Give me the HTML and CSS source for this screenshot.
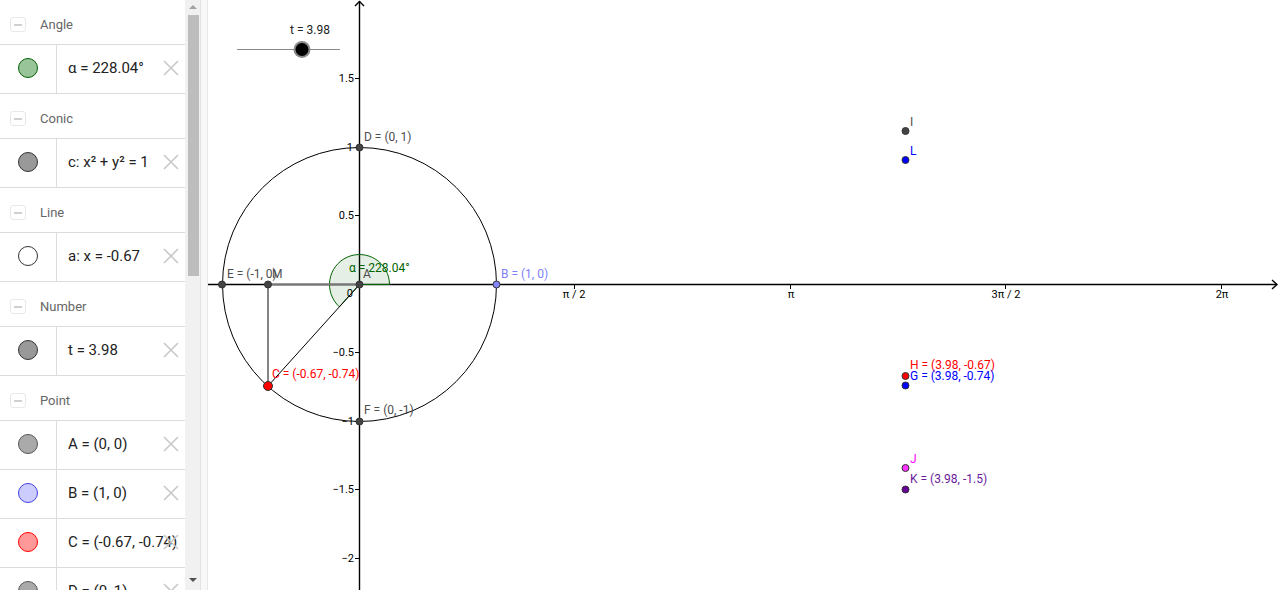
FILE: index.html
```html
<!DOCTYPE html>
<html lang="en">
<head>
<meta charset="utf-8">
<title>Unit circle</title>
<link rel="stylesheet" href="styles.css">
</head>
<body>
<div class="app">
  <aside class="algebra">
    <div class="list">
      <section class="group">
        <div class="group-head"><span class="toggle"></span><span class="group-title">Angle</span></div>
        <div class="item last">
          <div class="marble-cell"><span class="marble m-angle"></span></div>
          <div class="item-text">α = 228.04°</div>
          <svg class="del" viewBox="0 0 16 16"><path d="M1 1L15 15M15 1L1 15"/></svg>
        </div>
      </section>
      <section class="group">
        <div class="group-head"><span class="toggle"></span><span class="group-title">Conic</span></div>
        <div class="item last">
          <div class="marble-cell"><span class="marble m-gray"></span></div>
          <div class="item-text">c: x² + y² = 1</div>
          <svg class="del" viewBox="0 0 16 16"><path d="M1 1L15 15M15 1L1 15"/></svg>
        </div>
      </section>
      <section class="group">
        <div class="group-head"><span class="toggle"></span><span class="group-title">Line</span></div>
        <div class="item last">
          <div class="marble-cell"><span class="marble m-white"></span></div>
          <div class="item-text">a: x = -0.67</div>
          <svg class="del" viewBox="0 0 16 16"><path d="M1 1L15 15M15 1L1 15"/></svg>
        </div>
      </section>
      <section class="group">
        <div class="group-head"><span class="toggle"></span><span class="group-title">Number</span></div>
        <div class="item last">
          <div class="marble-cell"><span class="marble m-gray"></span></div>
          <div class="item-text">t = 3.98</div>
          <svg class="del" viewBox="0 0 16 16"><path d="M1 1L15 15M15 1L1 15"/></svg>
        </div>
      </section>
      <section class="group">
        <div class="group-head"><span class="toggle"></span><span class="group-title">Point</span></div>
        <div class="item">
          <div class="marble-cell"><span class="marble m-lgray"></span></div>
          <div class="item-text">A = (0, 0)</div>
          <svg class="del" viewBox="0 0 16 16"><path d="M1 1L15 15M15 1L1 15"/></svg>
        </div>
        <div class="item">
          <div class="marble-cell"><span class="marble m-blue"></span></div>
          <div class="item-text">B = (1, 0)</div>
          <svg class="del" viewBox="0 0 16 16"><path d="M1 1L15 15M15 1L1 15"/></svg>
        </div>
        <div class="item">
          <div class="marble-cell"><span class="marble m-red"></span></div>
          <div class="item-text">C = (-0.67, -0.74)</div>
          <svg class="del" viewBox="0 0 16 16"><path d="M1 1L15 15M15 1L1 15"/></svg>
        </div>
        <div class="item">
          <div class="marble-cell"><span class="marble m-lgray"></span></div>
          <div class="item-text">D = (0, 1)</div>
          <svg class="del" viewBox="0 0 16 16"><path d="M1 1L15 15M15 1L1 15"/></svg>
        </div>
      </section>
    </div>
    <div class="scrollbar">
      <span class="arrow-up"></span>
      <span class="thumb"></span>
      <span class="arrow-down"></span>
    </div>
  </aside>
  <div class="splitter"></div>
  <main class="canvas">
    <svg class="graphics" viewBox="208 0 1072 590" width="1072" height="590">
      <!-- slider -->
      <line x1="237" y1="49.5" x2="340" y2="49.5" class="slider-line"/>
      <circle cx="302" cy="49.5" r="8.5" fill="#8a8a8a"/>
      <circle cx="302" cy="49.5" r="6.5" fill="#000"/>
      <text x="310" y="34" class="lbl dark" text-anchor="middle">t = 3.98</text>

      <!-- axes -->
      <line x1="208" y1="284.5" x2="1277" y2="284.5" class="axis"/>
      <path d="M1272 280L1277 284.5L1272 289" class="axis" fill="none"/>
      <line x1="359.5" y1="1" x2="359.5" y2="590" class="axis"/>
      <path d="M355 6L359.5 1.5L364 6" class="axis" fill="none"/>

      <!-- y ticks -->
      <g class="tick">
        <line x1="355" y1="78.5" x2="359" y2="78.5"/>
        <line x1="355" y1="147.5" x2="359" y2="147.5"/>
        <line x1="355" y1="215.5" x2="359" y2="215.5"/>
        <line x1="355" y1="352.5" x2="359" y2="352.5"/>
        <line x1="355" y1="421.5" x2="359" y2="421.5"/>
        <line x1="355" y1="489.5" x2="359" y2="489.5"/>
        <line x1="355" y1="558.5" x2="359" y2="558.5"/>
        <line x1="574.5" y1="284" x2="574.5" y2="289"/>
        <line x1="790.5" y1="284" x2="790.5" y2="289"/>
        <line x1="1005.5" y1="284" x2="1005.5" y2="289"/>
        <line x1="1221.5" y1="284" x2="1221.5" y2="289"/>
      </g>
      <g class="axlbl" text-anchor="end">
        <text x="354" y="82">1.5</text>
        <text x="353" y="151">1</text>
        <text x="354" y="219">0.5</text>
        <text x="354" y="356">−0.5</text>
        <text x="354" y="425">−1</text>
        <text x="354" y="493">−1.5</text>
        <text x="354" y="562">−2</text>
        <text x="353" y="297">0</text>
      </g>
      <g class="axlbl" text-anchor="middle">
        <text x="574" y="298">π / 2</text>
        <text x="791" y="298">π</text>
        <text x="1006" y="298">3π / 2</text>
        <text x="1222" y="298">2π</text>
      </g>

      <!-- unit circle -->
      <circle cx="359.5" cy="284.5" r="137" fill="none" stroke="#000" stroke-width="1"/>

      <!-- angle sector -->
      <path d="M359.5 284.5L389.5 284.5A30 30 0 1 0 339.4 306.8Z" fill="rgba(0,100,0,0.1)" stroke="#006400" stroke-width="1"/>

      <!-- segments -->
      <line x1="268" y1="284.5" x2="359.5" y2="284.5" stroke="#777" stroke-width="2"/>
      <line x1="268" y1="284.5" x2="268" y2="386" stroke="#666" stroke-width="1.6"/>
      <line x1="359.5" y1="284.5" x2="268" y2="386" stroke="#000" stroke-width="1"/>

      <!-- points -->
      <g class="pt">
        <circle cx="222" cy="284.5" r="3.5" fill="#444"/>
        <circle cx="268" cy="284.5" r="3.5" fill="#444"/>
        <circle cx="359.5" cy="284.5" r="3.5" fill="#444"/>
        <circle cx="496.5" cy="284.5" r="3.5" fill="#8585ff"/>
        <circle cx="359.5" cy="147.5" r="3.5" fill="#444"/>
        <circle cx="359.5" cy="421.5" r="3.5" fill="#444"/>
        <circle cx="268" cy="386" r="4.5" fill="#ff0000"/>
        <circle cx="905.5" cy="131" r="3.5" fill="#444"/>
        <circle cx="905.5" cy="160" r="3.5" fill="#0000ff"/>
        <circle cx="905.5" cy="376" r="3.5" fill="#ff0000"/>
        <circle cx="905.5" cy="385.5" r="3.5" fill="#0000ff"/>
        <circle cx="905.5" cy="468" r="3.5" fill="#ff33ff"/>
        <circle cx="905.5" cy="489.5" r="3.5" fill="#660099"/>
      </g>

      <!-- labels -->
      <text x="227" y="278" class="lbl grey">E = (-1, 0)</text>
      <text x="272" y="278" class="lbl grey">M</text>
      <text x="363" y="278" class="lbl grey">A</text>
      <text x="349" y="272" class="lbl green">α = 228.04°</text>
      <text x="501" y="278" class="lbl lav">B = (1, 0)</text>
      <text x="364" y="141" class="lbl grey">D = (0, 1)</text>
      <text x="364" y="414" class="lbl grey">F = (0, -1)</text>
      <text x="272" y="378" class="lbl red">C = (-0.67, -0.74)</text>
      <text x="910" y="126" class="lbl grey">I</text>
      <text x="910" y="155" class="lbl blue">L</text>
      <text x="910" y="369" class="lbl red">H = (3.98, -0.67)</text>
      <text x="910" y="380" class="lbl blue">G = (3.98, -0.74)</text>
      <text x="910" y="463" class="lbl pink">J</text>
      <text x="910" y="483" class="lbl purple">K = (3.98, -1.5)</text>
    </svg>
  </main>
</div>
</body>
</html>
```
FILE: styles.css
```css
* { box-sizing: border-box; }
html, body { margin: 0; padding: 0; height: 100%; overflow: hidden; background: #fff; }
body { font-family: Roboto, "Liberation Sans", Arial, sans-serif; }

.app { display: flex; width: 1280px; height: 590px; }

.algebra { display: flex; width: 200px; height: 590px; flex: none; overflow: hidden; background: #fff; }
.list { width: 185px; flex: none; overflow: hidden; }

.group-head { height: 44px; display: flex; align-items: center; padding-top: 5px; }
.toggle { width: 16px; height: 15px; margin-left: 10px; border: 1px solid #e8e8e8; border-radius: 3px; display: flex; align-items: center; justify-content: center; }
.toggle::before { content: ""; width: 8px; height: 2px; background: #d0d0d0; }
.group-title { margin-left: 14px; font-size: 13px; color: #666; }

.item { position: relative; display: flex; height: 49px; border-top: 1px solid #dcdcdc; }
.item.last { height: 50px; border-bottom: 1px solid #dcdcdc; }
.item:last-child { border-bottom: 1px solid #dcdcdc; }
.marble-cell { width: 57px; flex: none; border-right: 1px solid #dcdcdc; display: flex; align-items: center; justify-content: center; padding-bottom: 2px; }
.marble { width: 20px; height: 20px; border-radius: 50%; border: 1px solid #333; }
.m-angle { background: #99c499; border-color: #006400; }
.m-gray { background: #999; border-color: #333; }
.m-white { background: #fff; border-color: #333; }
.m-lgray { background: #aaa; border-color: #555; }
.m-blue { background: #ccccff; border-color: #4040e0; }
.m-red { background: #ff9999; border-color: #ff0000; }
.item-text { display: flex; align-items: center; padding-left: 11px; padding-bottom: 2px; font-size: 15px; color: #222; white-space: nowrap; }
.del { position: absolute; right: 6px; top: 15px; width: 16px; height: 16px; fill: none; stroke: #c8c8c8; stroke-width: 1.6; }

.scrollbar { width: 15px; flex: none; background: #f1f1f1; display: flex; flex-direction: column; align-items: center; position: relative; }
.arrow-up { margin-top: 5px; width: 0; height: 0; border-left: 4px solid transparent; border-right: 4px solid transparent; border-bottom: 4px solid #a3a3a3; }
.thumb { margin-top: 6px; width: 11px; height: 261px; background: #bdbdbd; margin-left: 1px; }
.arrow-down { margin-top: auto; margin-bottom: 8px; width: 0; height: 0; border-left: 4px solid transparent; border-right: 4px solid transparent; border-top: 4px solid #505050; }

.splitter { width: 8px; flex: none; background: #f8f8f8; border-left: 1px solid #e2e2e2; border-right: 1px solid #e8e8e8; }

.canvas { flex: 1; height: 590px; overflow: hidden; background: #fff; }
.graphics { display: block; }
.slider-line { stroke: #8a8a8a; stroke-width: 1; }
.axis { stroke: #000; stroke-width: 1.4; }
.tick line { stroke: #000; stroke-width: 1; }
.axlbl { font-family: Roboto, "Liberation Sans", sans-serif; font-size: 11px; fill: #000; }
.lbl { font-family: Roboto, "Liberation Sans", sans-serif; font-size: 12px; }
.pt circle { stroke: #333; stroke-width: 1; }
.dark { fill: #222; }
.grey { fill: #4d4d4d; }
.green { fill: #006400; }
.lav { fill: #7f7fff; }
.red { fill: #ff0000; }
.blue { fill: #0000ff; }
.pink { fill: #ff00ff; }
.purple { fill: #6a1b9a; }
```
